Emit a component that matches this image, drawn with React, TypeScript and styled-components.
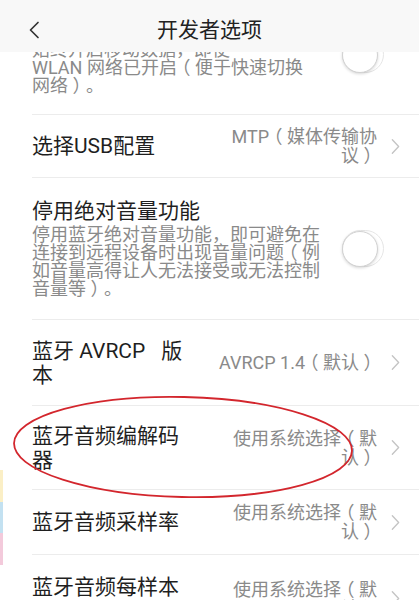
import styled, { createGlobalStyle } from 'styled-components'

const GlobalStyle = createGlobalStyle`
  * { box-sizing: border-box; }
  body {
    margin: 0;
    background: #fff;
    font-family: "Roboto", "Noto Sans CJK SC", sans-serif;
  }
`

type Item = {
  h: number
  title: string
  desc?: string
  value?: string
  toggle?: boolean
}

const items: Item[] = [
  {
    h: 120,
    title: '移动数据始终处于活动状态',
    desc: '始终开启移动数据，即使\nWLAN 网络已开启（便于快速切换\n网络）。',
    toggle: true,
  },
  { h: 63, title: '选择USB配置', value: 'MTP（媒体传输协\n议）' },
  {
    h: 142,
    title: '停用绝对音量功能',
    desc: '停用蓝牙绝对音量功能，即可避免在\n连接到远程设备时出现音量问题（例\n如音量高得让人无法接受或无法控制\n音量等）。',
    toggle: true,
  },
  { h: 86, title: '蓝牙 AVRCP\u2002 版\n本', value: 'AVRCP 1.4（默认）' },
  { h: 84, title: '蓝牙音频编解码\n器', value: '使用系统选择（默\n认）' },
  { h: 65, title: '蓝牙音频采样率', value: '使用系统选择（默\n认）' },
  { h: 88, title: '蓝牙音频每样本\n位数', value: '使用系统选择（默\n认）' },
]

// the brackets in the shot sit centred in their full-width cell
const withBrackets = (s: string) =>
  s.split(/([（）])/).map((part, i) => {
    if (part === '（') return <Bracket key={i} $shift={-0.25}>（</Bracket>
    if (part === '）') return <Bracket key={i} $shift={0.25}>）</Bracket>
    return part
  })

const ChevronRight = () => (
  <svg width={9} height={17} viewBox="0 0 10 18" fill="none">
    <path d="M1.5 1.5 L8.5 9 L1.5 16.5" stroke="#c4c4c4" strokeWidth="1.5" strokeLinecap="round" strokeLinejoin="round" />
  </svg>
)

const ChevronLeft = () => (
  <svg width={12} height={18} viewBox="0 0 12 18" fill="none">
    <path d="M10 1.5 L2.5 9 L10 16.5" stroke="#333" strokeWidth="1.7" strokeLinecap="round" strokeLinejoin="round" />
  </svg>
)

const App = () => {
  return (
    <>
      <GlobalStyle />
      <Screen>
        <List>
          {items.map((it, i) => (
            <Row key={i} $h={it.h}>
              <Main>
                <Title>{it.title}</Title>
                {it.desc && <Desc>{withBrackets(it.desc)}</Desc>}
              </Main>
              {it.value && (
                <>
                  <Value>{withBrackets(it.value)}</Value>
                  <Arrow>
                    <ChevronRight />
                  </Arrow>
                </>
              )}
              {it.toggle && (
                <Track>
                  <Knob />
                </Track>
              )}
            </Row>
          ))}
        </List>

        <Header>
          <Back>
            <ChevronLeft />
          </Back>
          <HeaderTitle>开发者选项</HeaderTitle>
          <span />
        </Header>

        <Annotation width="419" height="600" viewBox="0 0 419 600">
          <ellipse cx="183" cy="447" rx="169" ry="50" fill="none" stroke="#d3262d" strokeWidth="1.8" transform="rotate(1.3 183 447)" />
        </Annotation>

        <EdgeStrips>
          <Strip $color="#fbefc6" />
          <Strip $color="#c3e1f1" />
          <Strip $color="#f3cadb" />
        </EdgeStrips>
      </Screen>
    </>
  )
}

const Screen = styled.div`
  position: relative;
  width: 419px;
  height: 600px;
  overflow: hidden;
  background: #fff;
`

const Header = styled.div`
  position: absolute;
  top: 0;
  left: 0;
  right: 0;
  height: 52px;
  padding-top: 8px;
  background: #f8f8f8;
  display: grid;
  grid-template-columns: 1fr auto 1fr;
  align-items: center;
`

const Back = styled.div`
  margin-left: 28px;
  display: flex;
  align-items: center;
`

const HeaderTitle = styled.div`
  font-size: 21px;
  color: #222;
  line-height: 24px;
`

const List = styled.div`
  margin-top: -5px;
  display: flex;
  flex-direction: column;
`

const Row = styled.div<{ $h: number }>`
  height: ${(p) => p.$h}px;
  margin-left: 32px;
  padding-right: 19px;
  border-bottom: 1px solid #ececec;
  display: flex;
  align-items: center;
`

const Main = styled.div`
  flex: 1;
  min-width: 0;
  display: flex;
  flex-direction: column;
`

const Title = styled.div`
  font-size: 21px;
  line-height: 24px;
  color: #1f1f1f;
  white-space: pre;
`

const Desc = styled.div`
  margin-top: 3px;
  font-size: 18px;
  line-height: 18px;
  color: #8a8a8a;
  white-space: pre;
`

const Value = styled.div`
  font-size: 18px;
  line-height: 19px;
  color: #8a8a8a;
  text-align: right;
  white-space: pre;
`

const Bracket = styled.span<{ $shift: number }>`
  display: inline-block;
  width: 1em;
  transform: translateX(${(p) => p.$shift}em);
`

const Arrow = styled.div`
  margin-left: 14px;
  display: flex;
  align-items: center;
`

const Track = styled.div`
  flex-shrink: 0;
  width: 42px;
  height: 37px;
  margin-right: 16px;
  border: 1.5px solid #e6e6e6;
  border-radius: 19px;
  display: flex;
  align-items: center;
`

const Knob = styled.div`
  width: 36px;
  height: 36px;
  margin-left: -1.5px;
  border-radius: 50%;
  background: #fff;
  border: 1.5px solid #d2d2d2;
  box-shadow: 0 1px 3px rgba(0, 0, 0, 0.16);
`

const Annotation = styled.svg`
  position: absolute;
  top: 0;
  left: 0;
  pointer-events: none;
`

const EdgeStrips = styled.div`
  position: absolute;
  left: 0;
  top: 470px;
  width: 3px;
  height: 95px;
  display: flex;
  flex-direction: column;
`

const Strip = styled.div<{ $color: string }>`
  flex: 1;
  background: ${(p) => p.$color};
`

export default App
